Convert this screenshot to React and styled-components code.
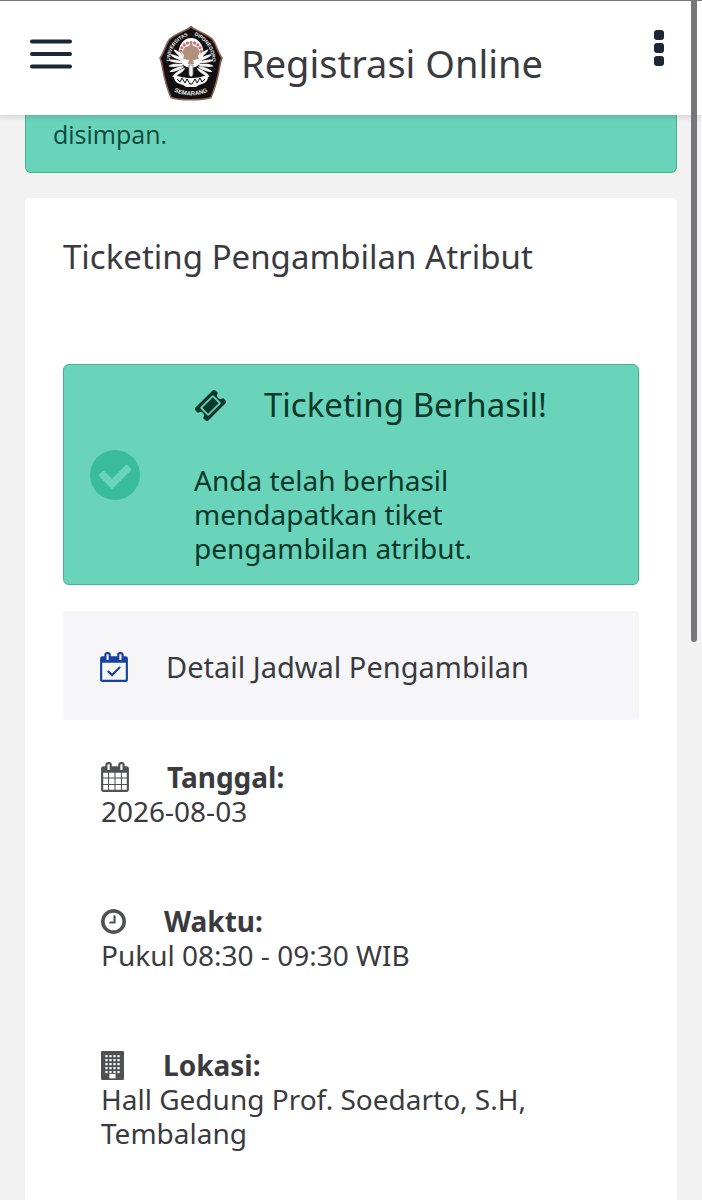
import React from "react";
import styled, { createGlobalStyle } from "styled-components";

const GlobalStyle = createGlobalStyle`
  *, *::before, *::after { box-sizing: border-box; }
  body {
    margin: 0;
    background: #f2f2f2;
    color: #3a3b40;
    font-family: "Noto Sans", "Open Sans", sans-serif;
    font-size: 28px;
    line-height: 34px;
  }
  h1, h2, h3, p, dl, dt, dd { margin: 0; font-weight: 400; }
`;

const Header = styled.header`
  position: relative;
  z-index: 2;
  display: grid;
  grid-template-columns: 1fr auto 1fr;
  align-items: center;
  height: 115px;
  padding: 0 30px;
  background: #fff;
  border-top: 1px solid #77777a;
  box-shadow: 0 2px 6px rgba(0, 0, 0, 0.14);
`;

const IconButton = styled.button`
  display: flex;
  justify-self: ${(p) => p.$side};
  padding: 0 ${(p) => (p.$side === "end" ? 8 : 0)}px ${(p) => p.$lift}px 0;
  border: 0;
  background: none;
  color: #1c2735;
`;

const Brand = styled.a`
  display: flex;
  align-items: center;
  gap: 18px;
  padding-top: 10px;
  color: inherit;
  text-decoration: none;
`;

const BrandName = styled.h1`
  font-size: 38px;
  line-height: 48px;
  white-space: nowrap;
`;

const Main = styled.main`
  display: flex;
  flex-direction: column;
  gap: 25px;
  padding: 0 25px;
`;

const SavedNotice = styled.p`
  padding: 2px 27px 21px;
  border: 1px solid #48b193;
  border-top: 0;
  border-radius: 0 0 6px 6px;
  background: #69d4ba;
  color: #0c4a3a;
  font-family: "Open Sans", "Noto Sans", sans-serif;
  font-size: 25px;
`;

const Card = styled.section`
  padding: 38px 38px 64px;
  border-radius: 5px 5px 0 0;
  background: #fff;
`;

const CardTitle = styled.h2`
  margin-bottom: 86px;
  font-size: 33px;
  line-height: 42px;
`;

const Success = styled.div`
  display: grid;
  grid-template-columns: 50px 1fr;
  align-items: center;
  column-gap: 54px;
  padding: 19px 80px 19px 26px;
  border: 1px solid #48b193;
  border-radius: 6px;
  background: #69d4ba;
  color: #08382c;
`;

const SuccessTitle = styled.h3`
  display: flex;
  align-items: center;
  gap: 37px;
  margin-bottom: 37px;
  font-size: 33px;
  line-height: 42px;
  white-space: nowrap;
`;

const Panel = styled.h3`
  display: flex;
  align-items: center;
  gap: 38px;
  margin-top: 26px;
  padding: 39px 37px 36px;
  border-radius: 4px;
  background: #f6f6f9;
  font-size: 29px;
`;

const Details = styled.dl`
  display: flex;
  flex-direction: column;
  gap: 76px;
  padding: 40px 38px 0;
`;

const Term = styled.dt`
  display: flex;
  align-items: center;
  gap: 38px;
  font-weight: 700;
`;

const Icon = styled.svg`
  display: block;
  flex: none;
  color: ${(p) => p.$tone || "#505154"};
`;

const ScrollThumb = styled.div`
  position: fixed;
  z-index: 3;
  top: 0;
  right: 5px;
  width: 6px;
  height: 642px;
  border-radius: 0 0 3px 3px;
  background: #777779;
`;

const TABS =
  "M576 448v-288q0-13-9.500-22.500t-22.500-9.500h-64q-13 0-22.500 9.500t-9.500 22.500v288q0 13 9.500 22.500t22.500 9.500h64q13 0 22.500-9.500t9.500-22.500zm768 0v-288q0-13-9.500-22.500t-22.500-9.500h-64q-13 0-22.500 9.500t-9.500 22.500v288q0 13 9.500 22.500t22.500 9.500h64q13 0 22.500-9.500t9.500-22.500z";
const FRAME =
  "M1728 384v1280q0 52-38 90t-90 38h-1408q-52 0-90-38t-38-90v-1280q0-52 38-90t90-38h128v-96q0-66 47-113t113-47h64q66 0 113 47t47 113v96h384v-96q0-66 47-113t113-47h64q66 0 113 47t47 113v96h128q52 0 90 38t38 90z";
const CELLS =
  "M192 1664h288v-288h-288zM544 1664h320v-288h-320zM928 1664h320v-288h-320zM1312 1664h288v-288h-288zM192 1312h288v-320h-288zM544 1312h320v-320h-320zM928 1312h320v-320h-320zM1312 1312h288v-320h-288zM192 928h288v-288h-288zM544 928h320v-288h-320zM928 928h320v-288h-320zM1312 928h288v-288h-288z";

const CalendarIcon = () => (
  <Icon width="28" height="30" viewBox="64 0 1664 1792" aria-hidden="true">
    <path fill="currentColor" fillRule="evenodd" d={FRAME + TABS + CELLS} />
  </Icon>
);

const CalendarCheckIcon = () => (
  <Icon $tone="#1741a0" width="28" height="30" viewBox="64 0 1664 1792" aria-hidden="true">
    <path fill="currentColor" fillRule="evenodd" d={FRAME + TABS + "M192 1664h1408v-1024h-1408z"} />
    <path d="M530 1130l250 250 480-480" fill="none" stroke="currentColor" strokeWidth="125" />
  </Icon>
);

const ClockIcon = () => (
  <Icon width="25" height="25" viewBox="128 128 1536 1536" aria-hidden="true">
    <path
      fill="currentColor"
      d="M1024 544v448q0 14-9 23t-23 9h-320q-14 0-23-9t-9-23v-64q0-14 9-23t23-9h224v-352q0-14 9-23t23-9h64q14 0 23 9t9 23zm416 352q0-148-73-273t-198-198-273-73-273 73-198 198-73 273 73 273 198 198 273 73 273-73 198-198 73-273zm224 0q0 209-103 385.500t-279.500 279.500-385.500 103-385.500-103-279.500-279.500-103-385.500 103-385.500 279.500-279.500 385.500-103 385.500 103 279.500 279.500 103 385.500z"
    />
  </Icon>
);

const WINDOWS = [4, 8, 12, 16, 20].flatMap((y) => [4, 8, 12, 16].map((x) => [x, y]));

const BuildingIcon = () => (
  <Icon width="24" height="29" viewBox="0 0 24 29" aria-hidden="true">
    <rect width="23" height="29" rx="1" fill="currentColor" />
    {WINDOWS.map(([x, y]) => (
      <rect key={`${x}-${y}`} x={x + 0.4} y={y} width="2.200" height="2.200" fill="#fff" />
    ))}
    <rect x="8.400" y="23" width="6.200" height="4.300" fill="#fff" />
  </Icon>
);

const TicketIcon = () => (
  <Icon $tone="#08382c" width="33" height="33" viewBox="0 0 1792 1792" aria-hidden="true">
    <path
      fill="currentColor"
      d="M1024 452l316 316-572 572-316-316zm-211 979l618-618q19-19 19-45t-19-45l-362-362q-18-18-45-18t-45 18l-618 618q-19 19-19 45t19 45l362 362q18 18 45 18t45-18zm889-637l-907 908q-37 37-90.500 37t-90.500-37l-126-126q56-56 56-136t-56-136-136-56-136 56l-125-126q-37-37-37-90.500t37-90.500l907-906q37-37 90.500-37t90.500 37l125 125q-56 56-56 136t56 136 136 56 136-56l126 125q37 37 37 90.500t-37 90.500z"
    />
  </Icon>
);

const CheckIcon = () => (
  <Icon width="50" height="50" viewBox="0 0 50 50" aria-hidden="true">
    <circle cx="25" cy="25" r="25" fill="#38bc9a" />
    <path
      d="M9.200 26.500q-1-1 0-2l3.300-3.300q1-1 2 0l7.500 7.500 13.500-13.500q1-1 2 0l3.300 3.300q1 1 0 2l-17.800 17.800q-1 1-2 0z"
      fill="#69d4ba"
    />
  </Icon>
);

const MenuIcon = () => (
  <Icon $tone="#1c2735" width="42" height="30" viewBox="0 0 42 30" aria-hidden="true">
    <path d="M2 2.500h38M2 15h38M2 27.500h38" stroke="currentColor" strokeWidth="4" strokeLinecap="round" />
  </Icon>
);

const MoreIcon = () => (
  <Icon $tone="#1c2735" width="10" height="36" viewBox="0 0 10 36" aria-hidden="true">
    {[0, 13, 26].map((y) => (
      <rect key={y} y={y} width="10" height="10" rx="3" fill="currentColor" />
    ))}
  </Icon>
);

const LEAVES = [-125, -110, -95, -80, -65, -50, 50, 65, 80, 95, 110, 125];
const BEADS = [-100, -80, -60, -40, -20, 0, 20, 40, 60, 80, 100];

const Crest = () => (
  <Icon width="64" height="76" viewBox="0 0 64 76" role="img" aria-label="Universitas Diponegoro Semarang">
    <defs>
      <path id="crest-left" d="M11 36C11 25 16 16 30 10" />
      <path id="crest-right" d="M35 10C48 16 53 25 53 36" />
      <path id="crest-base" d="M12 65Q32 76 52 65" />
    </defs>
    <path
      d="M32 1.500C36 6 48 8 54 15C58 21 59 28 63 33C60 38 61 52 52 72.500C44 75.500 20 75.500 12 72.500C3 52 4 38 1 33C5 28 6 21 10 15C16 8 28 6 32 1.500Z"
      fill="#141011"
      stroke="#8c6252"
      strokeWidth="1.600"
    />
    <ellipse cx="32" cy="28" rx="12.500" ry="15" fill="#fff" />
    {BEADS.map((a) => (
      <circle key={a} cx="32" cy="17.500" r="1.500" fill="#c4686c" transform={`rotate(${a} 32 28)`} />
    ))}
    {LEAVES.map((a) => (
      <ellipse key={a} cx="32" cy="24" rx="1.500" ry="7.500" fill="#f5f5f5" transform={`rotate(${a} 32 39)`} />
    ))}
    <path d="M15 49q6 4 17 4t17-4q1 8-6 10-4 1-6 3h-10q-2-2-6-3-7-2-6-10z" fill="#f5f5f5" />
    <path d="M18 54l3 3 2-4 3 5 2-4 3 5 2 0 3-5 2 4 3-5 2 4 3-3" fill="none" stroke="#141011" strokeWidth="1" />
    <path d="M32 16l2 5 4 1 3 5-2 4 1 3-6 1 1 4h-6l1-4-6-1 1-3-2-4 3-5 4-1z" fill="#b1917c" />
    <path d="M30 40h4v10l-2 2-2-2z" fill="#f5f5f5" stroke="#77706d" strokeWidth="0.800" />
    <g fill="#eee" fontFamily="Liberation Sans, sans-serif" fontWeight="700">
      <text fontSize="5"><textPath href="#crest-left">UNIVERSITAS</textPath></text>
      <text fontSize="5"><textPath href="#crest-right">DIPONEGORO</textPath></text>
      <text fontSize="6" textAnchor="middle"><textPath href="#crest-base" startOffset="50%">SEMARANG</textPath></text>
    </g>
  </Icon>
);

const DETAILS = [
  { label: "Tanggal:", value: "2026-08-03", Glyph: CalendarIcon },
  { label: "Waktu:", value: "Pukul 08:30 - 09:30 WIB", Glyph: ClockIcon },
  { label: "Lokasi:", value: "Hall Gedung Prof. Soedarto, S.H, Tembalang", Glyph: BuildingIcon },
];

export default function App() {
  return (
    <>
      <GlobalStyle />
      <Header>
        <IconButton type="button" aria-label="Menu" $side="start" $lift={8}>
          <MenuIcon />
        </IconButton>
        <Brand href="#">
          <Crest />
          <BrandName>Registrasi Online</BrandName>
        </Brand>
        <IconButton type="button" aria-label="Opsi lainnya" $side="end" $lift={20}>
          <MoreIcon />
        </IconButton>
      </Header>
      <Main>
        <SavedNotice>disimpan.</SavedNotice>
        <Card>
          <CardTitle>Ticketing Pengambilan Atribut</CardTitle>
          <Success role="status">
            <CheckIcon />
            <div>
              <SuccessTitle>
                <TicketIcon />
                Ticketing Berhasil!
              </SuccessTitle>
              <p>Anda telah berhasil mendapatkan tiket pengambilan atribut.</p>
            </div>
          </Success>
          <Panel>
            <CalendarCheckIcon />
            Detail Jadwal Pengambilan
          </Panel>
          <Details>
            {DETAILS.map(({ label, value, Glyph }) => (
              <div key={label}>
                <Term>
                  <Glyph />
                  {label}
                </Term>
                <dd>{value}</dd>
              </div>
            ))}
          </Details>
        </Card>
      </Main>
      <ScrollThumb />
    </>
  );
}
